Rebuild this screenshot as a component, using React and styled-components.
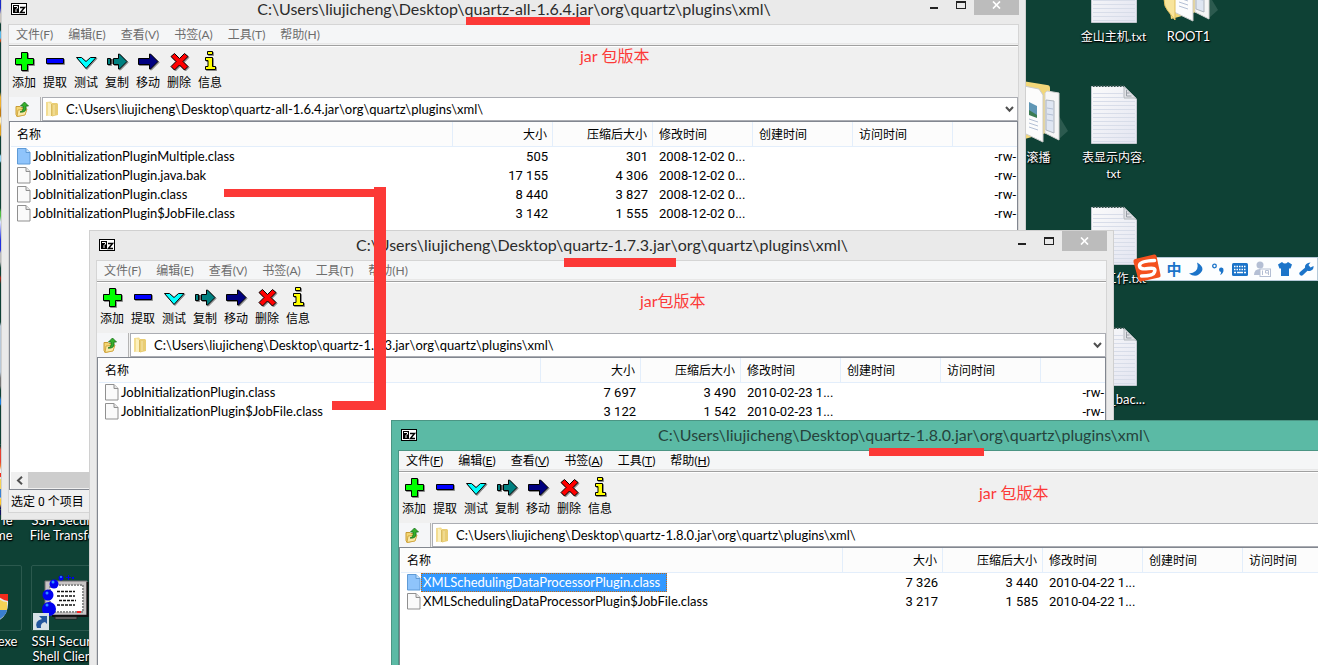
import React from "react";
import styled, { createGlobalStyle, css } from "styled-components";

const LATIN = `Lato, "Noto Sans CJK SC", sans-serif`;
const DIGITS = `Roboto, "Noto Sans CJK SC", sans-serif`;
const RED = "#fc3937";

const GlobalStyle = createGlobalStyle`
  * { box-sizing: border-box; }
  body { margin: 0; font: 12px/16px ${LATIN}; color: #000; }
  button, select { font: inherit; color: inherit; }
  svg { display: block; flex: none; }
`;

/* ---------- desktop ---------- */

const Desktop = styled.main`
  position: relative;
  height: 100vh;
  overflow: hidden;
  background: #0e4135;
`;

const EdgeStrip = styled.div`
  position: absolute;
  left: 0;
  top: 0;
  width: 1px;
  height: 515px;
  background: linear-gradient(
    #1a2ac8 0 8px, #c9c3bd 14px 22px, #0e4135 24px 30px, #58b8e8 32px 38px,
    #d8531e 40px 41px, #0e4135 43px 92px, #f0b030 97px 106px, #c07a10 110px 116px,
    #fff0c0 118px 122px, #e0a020 126px 135px, #0e4135 137px 154px, #8fd4f4 156px 161px,
    #0e4135 163px 208px, #50c040 212px 216px, #dfe4ff 222px, #2030e0 240px 250px,
    #bbb 253px 262px, #0e4135 268px 275px, #c02010 278px, #0e4135 284px 322px,
    #b8c8d8 326px 372px, #777 378px 386px, #0e4135 390px 396px, #1c80e0 400px 404px,
    #0e4135 406px 446px, #e84030 450px 462px, #f08030 466px, #f0f0f0 470px 482px,
    #ffc830 486px 504px, #101060 508px
  );
`;

const Shortcut = styled.figure`
  position: absolute;
  left: ${(p) => p.$x}px;
  top: ${(p) => p.$y}px;
  width: 75px;
  margin: 0;
  display: flex;
  flex-direction: column;
  align-items: center;
  gap: ${(p) => (p.$tiled ? 3 : 6)}px;
`;

const ShortcutLabel = styled.figcaption`
  width: ${(p) => (p.$width ? p.$width + "px" : "auto")};
  font-size: ${(p) => (p.$cjk ? 12 : 13)}px;
  line-height: ${(p) => (p.$cjk ? 16 : 15)}px;
  color: #fff;
  white-space: pre;
  text-align: ${(p) => p.$align || "center"};
  text-shadow: 0 1px 2px #000, 1px 1px 1px #000;
`;

const Tile = styled.div`
  width: 67px;
  height: 66px;
  display: grid;
  place-items: center;
  border: 1px solid #2b594e;
  border-radius: 2px;
`;

function TextFileIcon() {
  const lines = [];
  for (let y = 8; y < 57; y += 4) lines.push(y);
  return (
    <svg width="46" height="59" viewBox="0 0 46 59">
      <defs>
        <linearGradient id="sheet" x1="0" y1="0" x2="1" y2="1">
          <stop offset="0" stopColor="#fbfbfb" />
          <stop offset="1" stopColor="#e3e5f1" />
        </linearGradient>
      </defs>
      <path d="M.5 1.500H33L45.500 14v44.500H.5z" fill="url(#sheet)" stroke="#c3c8d0" />
      {lines.map((y) => (
        <path key={y} d={`M2 ${y}.500h${y < 14 ? 30 : 42}`} stroke="#d8dde9" />
      ))}
      <path d="M2 1h31" stroke="#33524b" strokeWidth="2" strokeDasharray="1.500 1.500" />
      <path d="M33 0h13v13z" fill="#0e4135" />
      <path d="M33 1.500V13h12z" fill="#e2e3e8" stroke="#b2b7bc" />
      <path d="M35.500 5v6h5M35.500 8h3" fill="none" stroke="#999fa6" />
    </svg>
  );
}

function FolderIcon() {
  return (
    <svg width="60" height="64" viewBox="0 0 60 64">
      <path d="M50 36l9 15-9 8z" fill="#2c5a4f" />
      <path d="M5 2q0-2 2-2l31 5q3 0 3 3v44L12 60z" fill="#f2d779" />
      <path d="M38 11l12 2v47l-14-7V13z" fill="#f6f6f6" stroke="#d2d2d2" />
      <path d="M37 20l8 1v32l-8-3z" fill="#dfe6f2" stroke="#adb4bd" />
      <path d="M15 6l15 3 4 6v47l-19-9z" fill="#fcfcfc" stroke="#cbcbcb" />
      <path d="M20 22l8 4v11l-8-3z" fill="#5f96b4" />
      <path d="M20 30l8 5v3l-8-3z" fill="#3c7c52" />
      <path d="M20 39l9 3M20 43l9 3M20 47l9 3M38 28l6 1M38 34l6 1M38 40l6 1" stroke="#b3bfd4" />
      <path d="M5 2l7 14q4 6 4 18v27L9 52q-4-4-4-12z" fill="#f8e49b" stroke="#e0bf5c" />
    </svg>
  );
}

function SshIcon() {
  return (
    <svg width="65" height="64" viewBox="0 0 65 64">
      <path d="M13 15h42v34H13z" fill="#c8c4c4" stroke="#716d70" />
      <path d="M55.500 16v34H20" fill="none" stroke="#111" strokeWidth="2" />
      <path d="M18 19h33v27H18z" fill="#fff" stroke="#8e8e8e" strokeWidth="2" strokeDasharray="2 1" />
      <path d="M25 25.500h18M25 30h18M27 34.500h17M25 39h18" stroke="#111" strokeWidth="1.500" strokeDasharray="3 1" />
      <path d="M45 46h4" stroke="#f22" strokeWidth="2" />
      <path d="M23 51h22v2H23z" fill="#999" stroke="#222" />
      <g fill="#0000f0">
        <circle cx="17" cy="43" r="7" />
        <circle cx="16" cy="29" r="5.500" />
        <circle cx="22" cy="18" r="4.500" />
        <circle cx="29" cy="12" r="2.500" />
        <path d="M34 11h5v1h-5zM36 9h1v5h-1zM40 11h2v2h-2z" />
      </g>
      <g fill="#2f8fff">
        <circle cx="15" cy="39" r="1.500" />
        <circle cx="15" cy="27" r="1.500" />
        <circle cx="21" cy="16" r="1.500" />
        <circle cx="29" cy="11" r="1" />
      </g>
      <path d="M1 47h16v17H1z" fill="#d6e1e6" />
      <path d="M5 62q-3-7 5-9l-3-3h8v8l-2-2q-5 1-4 6z" fill="#22569d" />
    </svg>
  );
}

function ShieldIcon() {
  return (
    <svg width="65" height="64" viewBox="0 0 65 64">
      <path d="M42 28h10v8l-10-3z" fill="#f22b1c" />
      <path d="M30 33q7 1 12-3 4 4 10 5 1 14-10 20Q31 49 30 33z" fill="#e8e8e8" />
      <path d="M42 32q4 4 9 4v8h-9z" fill="#f6d256" />
      <path d="M42 44h9q-1 6-9 10z" fill="#3a7fd0" />
      <path d="M32 35q6 0 10-3v12H32z" fill="#3a7fd0" />
      <path d="M32 44h10v10q-8-4-10-10z" fill="#f6d256" />
    </svg>
  );
}

/* ---------- archive window ---------- */

const Frame = styled.section`
  position: absolute;
  left: ${(p) => p.$x}px;
  top: ${(p) => p.$y}px;
  width: 1025px;
  height: 526px;
  display: flex;
  flex-direction: column;
  padding: 0 6px 6px;
  border: 1px solid ${(p) => (p.$active ? "#4b9584" : "#d0d0d0")};
  background: ${(p) => (p.$active ? "#5bbaa5" : "#eaeaea")};
`;

const TitleBar = styled.header`
  height: 29px;
  flex: none;
  display: grid;
  grid-template-columns: 1fr auto 1fr;
  align-items: center;
  padding-left: 3px;
`;

const Title = styled.h1`
  margin: 0 2px 2px 0;
  font-size: 16px;
  line-height: 20px;
  font-weight: 400;
  color: ${(p) => (p.$active ? "#26433c" : "#2b2b2b")};
`;

const CaptionButtons = styled.div`
  align-self: start;
  justify-self: end;
  display: flex;
`;

const CaptionButton = styled.button`
  width: ${(p) => (p.$close ? 45 : 27)}px;
  height: 20px;
  padding: 0;
  border: 0;
  display: grid;
  place-items: center;
  background: ${(p) => (p.$close ? "#bcbcbc" : "transparent")};
`;

const Client = styled.div`
  flex: 1;
  min-height: 0;
  display: flex;
  flex-direction: column;
  border: 1px solid ${(p) => (p.$active ? "#4b9584" : "#d5d5d5")};
  background: #f0f0f0;
`;

const MenuBar = styled.nav`
  height: 22px;
  flex: none;
  display: flex;
  align-items: center;
  padding-bottom: 2px;
  background: linear-gradient(#f5f6f7 0 18px, #e8e8e8 18px 19px, #f0f0f0 19px 20px, #a0a0a0 20px 21px, #fff 21px);
`;

const MenuItem = styled.button`
  border: 0;
  padding: 0 8px 0 7px;
  background: none;
  font-size: 12px;
  line-height: 18px;
  white-space: nowrap;
  color: ${(p) => (p.$active ? "#000" : "#6d6d6d")};
  & u { text-decoration: ${(p) => (p.$active ? "underline" : "none")}; }
`;

const ToolBar = styled.div`
  height: 50px;
  flex: none;
  display: flex;
  align-items: flex-start;
`;

const ToolButton = styled.button`
  width: 31px;
  padding: 4px 1px 0 0;
  border: 0;
  background: none;
  display: flex;
  flex-direction: column;
  align-items: center;
  gap: 3px;
  line-height: 16px;
  white-space: nowrap;
`;

const AddressBar = styled.div`
  height: 24px;
  flex: none;
  display: flex;
`;

const UpButton = styled.button`
  width: 32px;
  border: 0;
  border-right: 1px solid #b4b4b4;
  padding: 0 0 0 6px;
  display: flex;
  align-items: center;
  background: #f5f6f8;
`;

const Combo = styled.div`
  flex: 1;
  display: flex;
  align-items: center;
  margin-left: 1px;
  padding: 0 3px 0 2px;
  border: 1px solid #abadb3;
  background: #fff;
`;

const PathSelect = styled.select`
  flex: 1;
  appearance: none;
  border: 0;
  padding: 0 0 0 7px;
  background: transparent;
  font-size: 13px;
  line-height: 20px;
`;

const ListView = styled.div`
  flex: 1;
  min-height: 0;
  display: flex;
  flex-direction: column;
  justify-content: space-between;
  overflow: hidden;
  padding-left: 1px;
  border: 1px solid #828790;
  background: #fff;
`;

const FileTable = styled.table`
  width: 100%;
  table-layout: fixed;
  border-collapse: separate;
  border-spacing: 0;
`;

const Col = styled.col`
  width: ${(p) => (p.$width ? p.$width + "px" : "auto")};
`;

const numeric = css`
  text-align: right;
  padding-right: 5px;
`;

const HeadCell = styled.th`
  height: 25px;
  padding: 2px 6px 0;
  border-right: 1px solid #e3eefb;
  border-bottom: 1px solid #e3eefb;
  background: #fcfcfc;
  font-weight: 400;
  line-height: 16px;
  text-align: left;
  white-space: nowrap;
  ${(p) => p.$numeric && numeric}
  &:last-child { border-right: 0; }
`;

const Cell = styled.td`
  height: 19px;
  padding: 0 6px;
  font-family: ${DIGITS};
  font-size: 13px;
  line-height: 19px;
  white-space: nowrap;
  overflow: hidden;
  ${(p) => p.$numeric && numeric}
  &:last-child { padding-right: 1px; }
`;

const FileName = styled.div`
  display: flex;
  align-items: center;
  font-family: ${LATIN};
`;

const FileLabel = styled.span`
  height: 19px;
  line-height: 17px;
  padding: 0 6px 0 1px;
  border: 1px dotted ${(p) => (p.$selected ? "#c8690f" : "transparent")};
  background: ${(p) => (p.$selected ? "#3399ff" : "transparent")};
  color: ${(p) => (p.$selected ? "#fff" : "#000")};
`;

const ScrollBar = styled.div`
  display: flex;
  height: 17px;
  background: #f0f0f0;
`;

const ScrollButton = styled.button`
  width: 17px;
  border: 0;
  padding: 0;
  display: grid;
  place-items: center;
  background: #f0f0f0;
`;

const ScrollThumb = styled.div`
  flex: 1;
  margin: 0 200px 1px 0;
  background: #cdcdcd;
`;

const StatusBar = styled.footer`
  flex: none;
  height: 22px;
  padding: 4px 2px;
  font-family: ${DIGITS};
  font-size: 12px;
  line-height: 16px;
`;

function SevenZipIcon() {
  return (
    <svg width="16" height="13" viewBox="0 0 16 13">
      <rect x=".5" y=".5" width="15" height="11" fill="#fff" stroke="#000" />
      <rect x="2" y="2" width="6" height="8" />
      <path d="M3 3.500h3.500v1.500L5 6.500V9" fill="none" stroke="#fff" />
      <path d="M9 4.500h4.500L9.500 9.500H14" fill="none" stroke="#000" strokeWidth="1.500" />
    </svg>
  );
}

function UpFolderIcon() {
  return (
    <svg width="14" height="16" viewBox="0 0 14 16">
      <path d="M1 5.500h4l1 1h4v7l-8 2-1-2z" fill="#f3d673" stroke="#c99c35" />
      <path d="M3 9l9-1-2 6-8 1.500z" fill="#fae9a6" stroke="#d2a843" />
      <path d="M5 11q4-1 3-6H5.500L9.500 1l4 4H11q1 7-6 6z" fill="#35b02c" stroke="#16701a" strokeWidth=".8" />
    </svg>
  );
}

function PathFolderIcon() {
  return (
    <svg width="14" height="16" viewBox="0 0 14 16">
      <path d="M6 2h6l1 1v11l-6 1.500z" fill="#e9cd74" />
      <path d="M1 1l5-.500 1 1V14l-6 1z" fill="#f3dd92" />
      <path d="M3 1.500l3 1.500v12.500L3 14z" fill="#fcf0bd" />
      <path d="M6.500 3v12" stroke="#d9bb62" />
      <path d="M9 4v10" stroke="#f6e6ab" />
    </svg>
  );
}

function FileIcon({ tinted }) {
  return (
    <svg width="14" height="17" viewBox="0 0 14 17">
      <path
        d="M.5.5h8.500l4 4v11.500H.5z"
        fill={tinted ? "#8fc4fb" : "#fafafa"}
        stroke={tinted ? "#5f9bd6" : "#909090"}
      />
      <path d="M9 .5v4h4" fill={tinted ? "#c2e0ff" : "#e6e6e6"} stroke={tinted ? "#5f9bd6" : "#909090"} />
    </svg>
  );
}

function Chevron({ left }) {
  return left ? (
    <svg width="7" height="9" viewBox="0 0 7 9">
      <path d="M6 .8L2 4.500l4 3.700" fill="none" stroke="#505050" strokeWidth="2" />
    </svg>
  ) : (
    <svg width="9" height="7" viewBox="0 0 9 7">
      <path d="M1 1l3.500 3.800L8 1" fill="none" stroke="#505050" strokeWidth="2" />
    </svg>
  );
}

const TOOLS = [
  ["添加", ["M12.500 1.500h6v6h6v6h-6v6h-6v-6h-6v-6h6z"], "#00ff00"],
  ["提取", ["M6.500 7.500h17v5h-17z"], "#0000ff"],
  ["测试", ["M5.500 6.500h5l4.500 4 4.500-4h5.500L15 17.500z"], "#00ffff"],
  ["复制", ["M5.500 7.500h3v6h-3z", "M11.500 7.500h5v-4.500h1l7.500 7.500-7.500 7.500h-1v-4.500h-5z"], "#008080"],
  ["移动", ["M5.500 7.500h11v-4.500h1l7.500 7.500-7.500 7.500h-1v-4.500h-11z"], "#000080"],
  ["删除", ["M10.500 2.500l5 5 5-5 3.500 3-5 5 5 5-3.500 3.500-5-5-5 5L7 15.500l5-5-5-5z"], "#ff0000"],
  ["信息", ["M12.500.5h5v3h-5z", "M10.500 6.500h7v9h3v3h-10v-3h2.500v-6h-2.500z"], "#ffff00"],
];

function ToolIcon({ paths, color }) {
  return (
    <svg width="31" height="21" viewBox="0 0 31 21">
      <g transform="translate(1 1)" fill="#8a8a8a" stroke="#8a8a8a">
        {paths.map((d) => <path key={d} d={d} />)}
      </g>
      <g fill={color} stroke="#000">
        {paths.map((d) => <path key={d} d={d} />)}
      </g>
      {color === "#008080" && <path d="M10 8v5" stroke="#000" />}
    </svg>
  );
}

const MENUS = [["文件", "F"], ["编辑", "E"], ["查看", "V"], ["书签", "A"], ["工具", "T"], ["帮助", "H"]];
const COLUMNS = [["名称"], ["大小", true], ["压缩后大小", true], ["修改时间"], ["创建时间"], ["访问时间"], [""]];

function ArchiveWindow({ x, y, active, path, files }) {
  return (
    <Frame $x={x} $y={y} $active={active}>
      <TitleBar>
        <SevenZipIcon />
        <Title $active={active}>{path}</Title>
        <CaptionButtons>
          <CaptionButton aria-label="最小化">
            <svg width="27" height="20" viewBox="0 0 27 20"><path d="M10 12h8v2h-8z" fill="#222" /></svg>
          </CaptionButton>
          <CaptionButton aria-label="最大化">
            <svg width="27" height="20" viewBox="0 0 27 20">
              <path d="M9 6h10v8H9zM10 8v5h8V8z" fill="#222" fillRule="evenodd" />
            </svg>
          </CaptionButton>
          <CaptionButton $close aria-label="关闭">
            <svg width="9" height="8" viewBox="0 0 9 8">
              <path d="M1 .5l7 7M8 .5l-7 7" stroke="#fff" strokeWidth="1.700" />
            </svg>
          </CaptionButton>
        </CaptionButtons>
      </TitleBar>
      <Client $active={active}>
        <MenuBar>
          {MENUS.map(([name, key]) => (
            <MenuItem key={key} $active={active}>{name}(<u>{key}</u>)</MenuItem>
          ))}
        </MenuBar>
        <ToolBar>
          {TOOLS.map(([name, paths, color]) => (
            <ToolButton key={name}>
              <ToolIcon paths={paths} color={color} />
              {name}
            </ToolButton>
          ))}
        </ToolBar>
        <AddressBar>
          <UpButton aria-label="向上"><UpFolderIcon /></UpButton>
          <Combo>
            <PathFolderIcon />
            <PathSelect aria-label="路径" defaultValue={path}>
              <option>{path}</option>
            </PathSelect>
            <Chevron />
          </Combo>
        </AddressBar>
        <ListView>
          <FileTable>
            <colgroup>
              <Col $width={442} />
              <Col $width={100} /><Col $width={100} /><Col $width={100} />
              <Col $width={100} /><Col $width={100} />
              <Col />
            </colgroup>
            <thead>
              <tr>
                {COLUMNS.map(([name, num]) => <HeadCell key={name} $numeric={num}>{name}</HeadCell>)}
              </tr>
            </thead>
            <tbody>
              {files.map((f) => (
                <tr key={f.name}>
                  <Cell>
                    <FileName>
                      <FileIcon tinted={f.tinted} />
                      <FileLabel $selected={f.selected}>{f.name}</FileLabel>
                    </FileName>
                  </Cell>
                  <Cell $numeric>{f.size}</Cell>
                  <Cell $numeric>{f.packed}</Cell>
                  <Cell>{f.date}</Cell>
                  <Cell />
                  <Cell />
                  <Cell $numeric>-rw-</Cell>
                </tr>
              ))}
            </tbody>
          </FileTable>
          <ScrollBar>
            <ScrollButton aria-label="向左滚动"><Chevron left /></ScrollButton>
            <ScrollThumb />
          </ScrollBar>
        </ListView>
        <StatusBar>选定 0 个项目</StatusBar>
      </Client>
    </Frame>
  );
}

/* ---------- input method bar ---------- */

const ImeBar = styled.div`
  position: absolute;
  left: 1133px;
  right: 0;
  top: 254px;
  height: 28px;
  display: flex;
  align-items: center;
`;

const ImeStrip = styled.div`
  flex: 1;
  height: 24px;
  margin: 2px 0 0 -16px;
  padding: 0 1px 0 19px;
  display: flex;
  align-items: center;
  justify-content: space-between;
  border: 1px solid #b5c9d8;
  background: #fcfeff;
`;

const ImeLogo = styled.div`
  position: relative;
  z-index: 1;
`;

const ImeButton = styled.button`
  width: 18px;
  height: 20px;
  border: 0;
  padding: 0;
  display: grid;
  place-items: center;
  background: none;
  color: #1b74c9;
  font-size: 15px;
  font-weight: 700;
  line-height: 20px;
`;

function InputMethodBar() {
  return (
    <ImeBar>
      <ImeLogo>
        <svg width="28" height="28" viewBox="0 0 28 28">
          <path d="M2 5L21 .5q2-.5 2.500 1.500l4 19q.5 2-1.500 2.500L8 27.500q-2 .5-2.500-1.500L.5 8Q0 5.500 2 5z" fill="#f4511e" />
          <path d="M21.500 6.500Q6.500 7 6.500 11.500t8.500 3 6.500 3.500q-1 4-13 4" fill="none" stroke="#fff" strokeWidth="3.500" strokeLinecap="round" />
        </svg>
      </ImeLogo>
      <ImeStrip>
        <ImeButton>中</ImeButton>
        <ImeButton aria-label="月亮">
          <svg width="14" height="14" viewBox="0 0 14 14"><path d="M8 .5q7 4 5 8.500-5 8-13 2.500 11-1 8-11z" fill="#1b74c9" /></svg>
        </ImeButton>
        <ImeButton aria-label="标点">
          <svg width="13" height="12" viewBox="0 0 13 12">
            <circle cx="2.500" cy="3" r="1.800" fill="none" stroke="#1b74c9" strokeWidth="1.300" />
            <path d="M7 6.500a2.200 2.200 0 1 1 4.500.500q0 3.500-3.500 5 1.200-1.500 1-3Q7 8.500 7 6.500z" fill="#1b74c9" />
          </svg>
        </ImeButton>
        <ImeButton aria-label="键盘">
          <svg width="16" height="13" viewBox="0 0 16 13">
            <rect width="16" height="13" rx="1.500" fill="#1b74c9" />
            <path d="M2 3.500h12M2 6.500h12" stroke="#fff" strokeWidth="1.500" strokeDasharray="1.500 1" />
            <path d="M2 9.500h2M5 9.500h6M12 9.500h2" stroke="#fff" strokeWidth="1.500" />
          </svg>
        </ImeButton>
        <ImeButton aria-label="账号">
          <svg width="17" height="16" viewBox="0 0 17 16">
            <circle cx="6" cy="4" r="3.500" fill="#b4bfd4" />
            <path d="M0 14q0-6 6-6t6 6z" fill="#b4bfd4" />
            <rect x="6" y="8" width="10.500" height="7.500" fill="#fff" stroke="#b4bfd4" />
            <path d="M8.500 9.500v4.500M14.500 14V9.500h-3v2.500h3" fill="none" stroke="#b4bfd4" />
          </svg>
        </ImeButton>
        <ImeButton aria-label="皮肤">
          <svg width="14" height="14" viewBox="0 0 14 14"><path d="M4 0q3 3 6 0l4 2.500-1.500 4H11V14H3V6.500H1.500L0 2.500z" fill="#1b74c9" /></svg>
        </ImeButton>
        <ImeButton aria-label="工具">
          <svg width="15" height="14" viewBox="0 0 15 14">
            <path d="M11.500.5L9.500 3l2 2.500 3-1.500q.5 4-3.500 5-1.500.2-2.500-.3L4 13q-1.500 1.300-3 0t0-3l5-4.200Q5.500 1 11.500.5z" fill="#1b74c9" />
          </svg>
        </ImeButton>
      </ImeStrip>
    </ImeBar>
  );
}

/* ---------- annotations ---------- */

const MarkLayer = styled.svg`
  position: absolute;
  left: 0;
  top: 0;
`;

const Note = styled.p`
  position: absolute;
  left: ${(p) => p.$x}px;
  top: ${(p) => p.$y}px;
  margin: 0;
  font-size: 16px;
  line-height: 20px;
  white-space: nowrap;
  color: ${RED};
`;

const V164 = [
  { name: "JobInitializationPluginMultiple.class", size: "505", packed: "301", date: "2008-12-02 0...", tinted: true },
  { name: "JobInitializationPlugin.java.bak", size: "17 155", packed: "4 306", date: "2008-12-02 0..." },
  { name: "JobInitializationPlugin.class", size: "8 440", packed: "3 827", date: "2008-12-02 0..." },
  { name: "JobInitializationPlugin$JobFile.class", size: "3 142", packed: "1 555", date: "2008-12-02 0..." },
];
const V173 = [
  { name: "JobInitializationPlugin.class", size: "7 697", packed: "3 490", date: "2010-02-23 1..." },
  { name: "JobInitializationPlugin$JobFile.class", size: "3 122", packed: "1 542", date: "2010-02-23 1..." },
];
const V180 = [
  { name: "XMLSchedulingDataProcessorPlugin.class", size: "7 326", packed: "3 440", date: "2010-04-22 1...", tinted: true, selected: true },
  { name: "XMLSchedulingDataProcessorPlugin$JobFile.class", size: "3 217", packed: "1 585", date: "2010-04-22 1..." },
];

export default function App() {
  return (
    <Desktop>
      <GlobalStyle />
      <EdgeStrip />

      <Shortcut $x={1076} $y={-36}><TextFileIcon /><ShortcutLabel $cjk>金山主机.txt</ShortcutLabel></Shortcut>
      <Shortcut $x={1151} $y={-41}><FolderIcon /><ShortcutLabel>ROOT1</ShortcutLabel></Shortcut>
      <Shortcut $x={1001} $y={80}><FolderIcon /><ShortcutLabel $cjk>滚播</ShortcutLabel></Shortcut>
      <Shortcut $x={1076} $y={85}><TextFileIcon /><ShortcutLabel $cjk>{"表显示内容.\ntxt"}</ShortcutLabel></Shortcut>
      <Shortcut $x={1076} $y={206}><TextFileIcon /><ShortcutLabel $cjk $align="right" $width={65}>工作.txt</ShortcutLabel></Shortcut>
      <Shortcut $x={1076} $y={327}><TextFileIcon /><ShortcutLabel $align="right" $width={63}>_bac...</ShortcutLabel></Shortcut>

      <Shortcut $tiled $x={27} $y={444}><Tile><SshIcon /></Tile><ShortcutLabel>{"SSH Secure\nFile Transfer"}</ShortcutLabel></Shortcut>
      <Shortcut $tiled $x={27} $y={565}><Tile><SshIcon /></Tile><ShortcutLabel>{"SSH Secure\nShell Client"}</ShortcutLabel></Shortcut>
      <Shortcut $tiled $x={-49} $y={444}><Tile><ShieldIcon /></Tile><ShortcutLabel $align="right" $width={48}>{"le\nme"}</ShortcutLabel></Shortcut>
      <Shortcut $tiled $x={-49} $y={565}><Tile><ShieldIcon /></Tile><ShortcutLabel $align="right" $width={58}>.exe</ShortcutLabel></Shortcut>

      <ArchiveWindow x={1} y={-6} path={"C:\\Users\\liujicheng\\Desktop\\quartz-all-1.6.4.jar\\org\\quartz\\plugins\\xml\\"} files={V164} />
      <ArchiveWindow x={89} y={230} path={"C:\\Users\\liujicheng\\Desktop\\quartz-1.7.3.jar\\org\\quartz\\plugins\\xml\\"} files={V173} />
      <ArchiveWindow x={391} y={420} active path={"C:\\Users\\liujicheng\\Desktop\\quartz-1.8.0.jar\\org\\quartz\\plugins\\xml\\"} files={V180} />

      <InputMethodBar />

      <MarkLayer width="1000" height="480" viewBox="0 0 1000 480" fill={RED} pointerEvents="none">
        <rect x="466" y="17" width="124" height="8" />
        <rect x="564" y="258" width="112" height="9" />
        <rect x="869" y="448" width="115" height="8" />
        <path d="M224 189h150v-2h12v223h-54v-9h42V197H224z" />
      </MarkLayer>
      <Note $x={580} $y={46}>jar 包版本</Note>
      <Note $x={640} $y={291}>jar包版本</Note>
      <Note $x={979} $y={483}>jar 包版本</Note>
    </Desktop>
  );
}
